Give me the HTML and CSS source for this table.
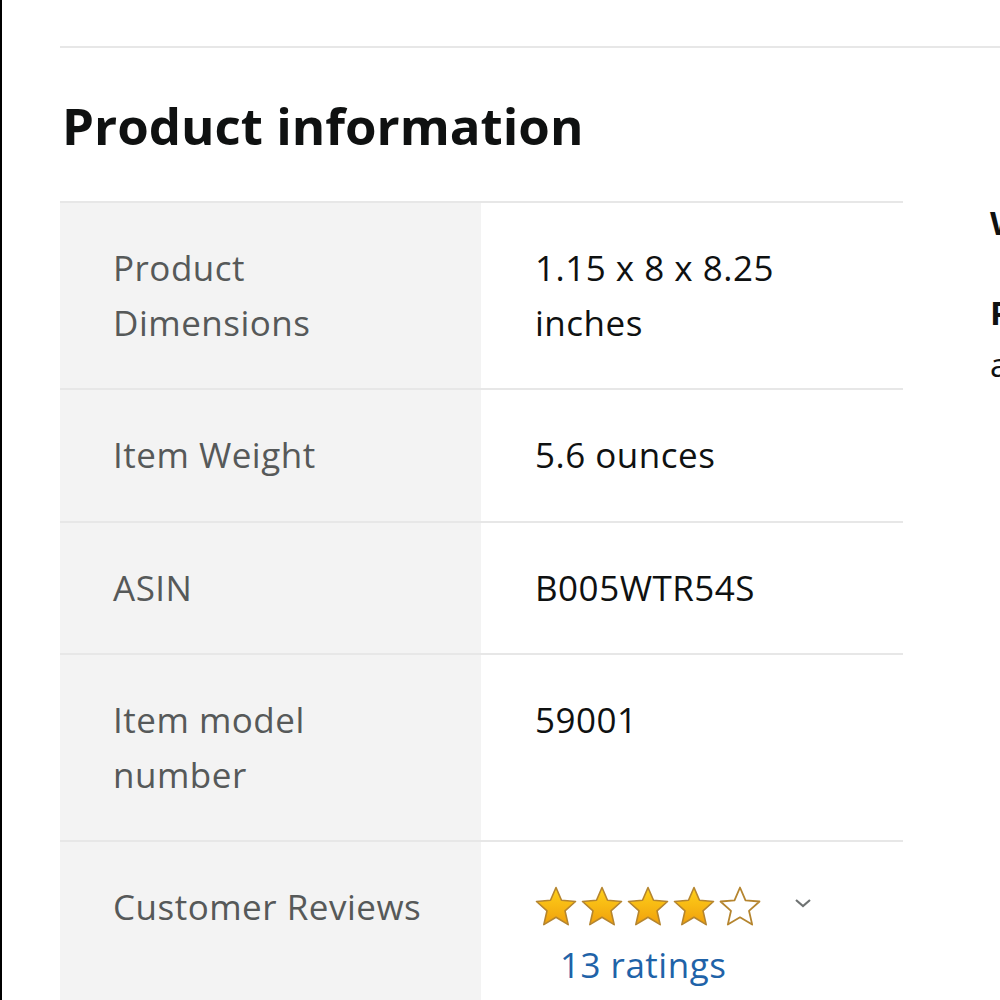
FILE: index.html
```html
<!DOCTYPE html>
<html lang="en">
<head>
<meta charset="utf-8">
<title>Product information</title>
<link rel="stylesheet" href="styles.css">
</head>
<body>
<div class="page">
  <div class="divider"></div>
  <div class="layout">
    <section class="main">
      <h2 class="title">Product information</h2>
      <table class="info">
        <tr><th>Product Dimensions</th><td>1.15 x 8 x 8.25 inches</td></tr>
        <tr><th>Item Weight</th><td>5.6 ounces</td></tr>
        <tr><th>ASIN</th><td>B005WTR54S</td></tr>
        <tr><th>Item model number</th><td>59001</td></tr>
        <tr><th>Customer Reviews</th><td>
          <div class="stars-row">
            <svg class="stars" width="232" height="44" viewBox="0 0 232 44">
              <defs>
                <linearGradient id="g" x1="0" y1="0" x2="0" y2="1">
                  <stop offset="0" stop-color="#ffd21a"/>
                  <stop offset="1" stop-color="#f0a00c"/>
                </linearGradient>
                <path id="s" d="M22 2.5 L27.5 15.3 L41.5 16.5 L31 25.8 L34.2 39.6 L22 32.3 L9.8 39.6 L13 25.8 L2.5 16.5 L16.5 15.3 Z"/>
              </defs>
              <use href="#s" x="0" fill="url(#g)" stroke="#b5852f" stroke-width="1.6" stroke-linejoin="round"/>
              <use href="#s" x="46" fill="url(#g)" stroke="#b5852f" stroke-width="1.6" stroke-linejoin="round"/>
              <use href="#s" x="92" fill="url(#g)" stroke="#b5852f" stroke-width="1.6" stroke-linejoin="round"/>
              <use href="#s" x="138" fill="url(#g)" stroke="#b5852f" stroke-width="1.6" stroke-linejoin="round"/>
              <use href="#s" x="184" fill="#fff" stroke="#b5852f" stroke-width="1.8" stroke-linejoin="round"/>
            </svg>
            <svg class="chev" width="18" height="12" viewBox="0 0 18 12"><path d="M2 3 L9 9 L16 3" fill="none" stroke="#6f7373" stroke-width="2.2"/></svg>
          </div>
          <a class="ratings" href="#">13 ratings</a>
        </td></tr>
      </table>
    </section>
    <aside class="side">
      <h3 class="side-title">Warranty &amp; Support</h3>
      <p class="side-text"><b>Product Warranty:</b> For warranty information about this product, please click here</p>
    </aside>
  </div>
</div>
</body>
</html>
```

FILE: styles.css
```css
html, body {
  margin: 0;
  padding: 0;
  background: #fff;
}
body {
  font-family: "Open Sans", "Noto Sans", sans-serif;
  color: #0f1111;
  overflow: hidden;
  height: 1000px;
}
.page {
  border-left: 2px solid #000;
  min-height: 1000px;
  padding-left: 58px;
  padding-top: 46px;
  box-sizing: border-box;
}
.divider {
  height: 2px;
  background: #e7e7e7;
  width: 2000px;
}
.layout {
  display: flex;
  gap: 87px;
}
.main {
  width: 843px;
  flex: none;
}
.title {
  font-size: 51px;
  font-weight: 700;
  line-height: 72px;
  margin: 41px 0 0 2px;
}
.info {
  border-collapse: collapse;
  table-layout: fixed;
  width: 843px;
  margin-top: 40px;
  font-size: 35px;
  letter-spacing: 0.5px;
  line-height: 54.5px;
}
.info tr {
  border-top: 2px solid #e7e7e7;
}
.info th {
  width: 315px;
  background: #f3f3f3;
  color: #565959;
  font-weight: 400;
  text-align: left;
  vertical-align: top;
  padding: 38px 53px 38px 53px;
}
.info td {
  vertical-align: top;
  padding: 38px 54px 38px 54px;
}
.stars-row {
  display: flex;
  align-items: center;
  height: 54px;
}
.stars {
  display: block;
  margin-left: -1px;
}
.chev {
  margin-left: 28px;
  margin-top: -8px;
}
.ratings {
  display: block;
  margin-top: 4px;
  margin-left: 25px;
  color: #1f63a8;
  text-decoration: none;
}
.side {
  flex: none;
  width: 720px;
}
.side-title {
  font-size: 33px;
  font-weight: 700;
  margin: 155px 0 0 0;
  line-height: 40px;
}
.side-text {
  font-size: 33px;
  line-height: 52px;
  margin: 44px 0 0 0;
}
```
